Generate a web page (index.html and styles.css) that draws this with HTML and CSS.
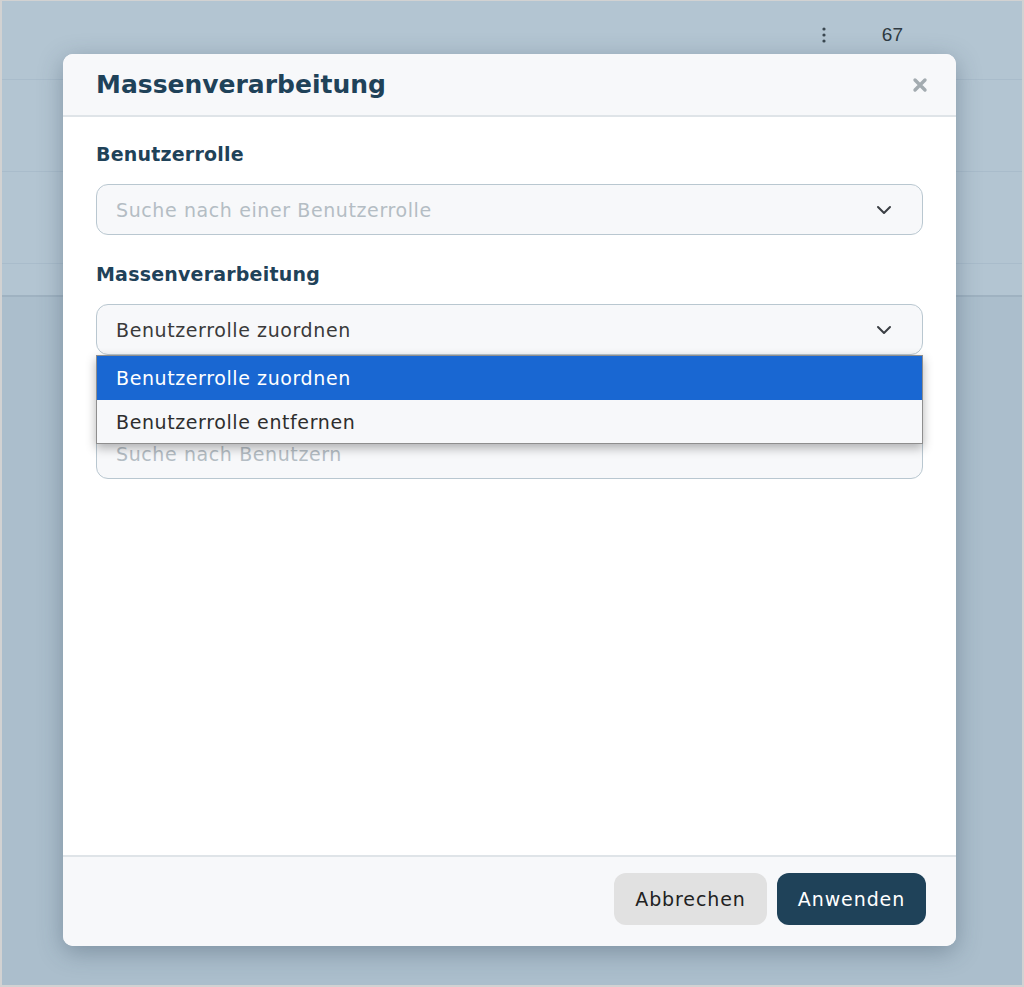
FILE: index.html
```html
<!DOCTYPE html>
<html lang="de">
<head>
<meta charset="utf-8">
<title>Massenverarbeitung</title>
<link rel="stylesheet" href="styles.css">
</head>
<body>
<div class="screen">
  <div class="page">
    <div class="page-toolbar">
      <span class="kebab">
        <svg width="4" height="16" viewBox="0 0 4 16"><circle cx="2" cy="2" r="1.6"/><circle cx="2" cy="8" r="1.6"/><circle cx="2" cy="14" r="1.6"/></svg>
      </span>
      <span class="count">67</span>
    </div>
    <div class="page-row tall"></div>
    <div class="page-row tall"></div>
    <div class="page-row short"></div>
    <div class="page-rest"></div>
  </div>

  <div class="overlay">
    <div class="modal">
      <div class="modal-header">
        <h1 class="modal-title">Massenverarbeitung</h1>
        <button class="close-btn" aria-label="Schließen">
          <svg width="16" height="16" viewBox="0 0 16 16"><path d="M3 3 L13 13 M13 3 L3 13" stroke="#a3abb0" stroke-width="3.4" stroke-linecap="round"/></svg>
        </button>
      </div>
      <div class="modal-body">
        <div class="field">
          <label class="field-label">Benutzerrolle</label>
          <div class="select">
            <span class="placeholder">Suche nach einer Benutzerrolle</span>
            <svg class="chevron" width="16" height="10" viewBox="0 0 16 10"><path d="M2 2 L8 8 L14 2" fill="none" stroke="#3b3f44" stroke-width="2" stroke-linecap="round" stroke-linejoin="round"/></svg>
          </div>
        </div>
        <div class="field">
          <label class="field-label">Massenverarbeitung</label>
          <div class="select-wrap">
            <div class="select">
              <span class="value">Benutzerrolle zuordnen</span>
              <svg class="chevron" width="16" height="10" viewBox="0 0 16 10"><path d="M2 2 L8 8 L14 2" fill="none" stroke="#3b3f44" stroke-width="2" stroke-linecap="round" stroke-linejoin="round"/></svg>
            </div>
            <ul class="options">
              <li class="option selected">Benutzerrolle zuordnen</li>
              <li class="option">Benutzerrolle entfernen</li>
            </ul>
          </div>
        </div>
        <div class="field field-users">
          <label class="field-label">Benutzer</label>
          <div class="select">
            <span class="placeholder">Suche nach Benutzern</span>
          </div>
        </div>
      </div>
      <div class="modal-footer">
        <button class="btn btn-secondary">Abbrechen</button>
        <button class="btn btn-primary">Anwenden</button>
      </div>
    </div>
  </div>
</div>
</body>
</html>
```
FILE: styles.css
```css
* {
  box-sizing: border-box;
}

html, body {
  margin: 0;
  padding: 0;
}

body {
  font-family: "DejaVu Sans", "Open Sans", sans-serif;
  color: #333;
}

.screen {
  position: relative;
  width: 1024px;
  height: 987px;
  border: 2px solid #d2d2d2;
  border-top-width: 1px;
  overflow: hidden;
}

/* dimmed page behind the dialog */
.page {
  height: 100%;
  display: flex;
  flex-direction: column;
  background: #b3c5d2;
}

.page-toolbar {
  height: 79px;
  flex: none;
  display: flex;
  align-items: center;
  justify-content: flex-end;
  padding: 0 119px 10px 0;
  gap: 56px;
  border-bottom: 1px solid #a9bccb;
}

.kebab svg {
  display: block;
  fill: #3a4750;
}

.count {
  font-family: "Liberation Sans", Arial, sans-serif;
  font-size: 19px;
  color: #2f3a42;
}

.page-row {
  flex: none;
  border-bottom: 1px solid #a9bccb;
}

.page-row.tall {
  height: 92px;
}

.page-row.short {
  height: 33px;
  border-bottom: 2px solid #9fb2c1;
}

.page-rest {
  flex: 1;
  background: #abbecc;
}

/* dialog */
.overlay {
  position: absolute;
  inset: 0;
  padding: 53px 0 0 61px;
}

.modal {
  width: 893px;
  height: 892px;
  display: flex;
  flex-direction: column;
  background: #fff;
  border-radius: 10px;
  overflow: hidden;
  box-shadow: 0 6px 24px rgba(40, 60, 80, 0.35);
}

.modal-header {
  height: 63px;
  flex: none;
  display: flex;
  align-items: center;
  justify-content: space-between;
  padding: 0 28px 0 33px;
  background: #f7f8fa;
  border-bottom: 2px solid #dfe4e8;
}

.modal-title {
  margin: 0;
  font-size: 25px;
  font-weight: 700;
  color: #1f4259;
}

.close-btn {
  border: 0;
  background: none;
  padding: 0;
  display: flex;
}

.modal-body {
  flex: 1;
  display: flex;
  flex-direction: column;
  gap: 27px;
  padding: 25px 33px 0;
}

.field {
  display: flex;
  flex-direction: column;
  gap: 18px;
}

.field-users {
  margin-top: 4px;
}

.field-label {
  font-size: 19px;
  font-weight: 700;
  letter-spacing: 0.2px;
  color: #1f4259;
  line-height: 24px;
}

.select-wrap {
  position: relative;
}

.select {
  height: 51px;
  display: flex;
  align-items: center;
  justify-content: space-between;
  padding: 0 30px 0 19px;
  background: #f7f8fa;
  border: 1px solid #b9c7d0;
  border-radius: 12px;
  font-size: 19px;
  letter-spacing: 0.6px;
}

.placeholder {
  color: #b4bdc4;
}

.value {
  color: #3a3a3a;
}

.chevron {
  display: block;
}

.options {
  position: absolute;
  left: 0;
  right: 0;
  top: 51px;
  z-index: 2;
  margin: 0;
  padding: 0;
  list-style: none;
  background: #f7f8fa;
  border: 1px solid #8e8e8e;
  box-shadow: 0 4px 10px rgba(0, 0, 0, 0.3);
  font-size: 19px;
  letter-spacing: 0.6px;
}

.option {
  height: 43px;
  display: flex;
  align-items: center;
  padding: 0 19px;
  color: #2e2e2e;
}

.option.selected {
  height: 44px;
  background: #1967d2;
  color: #fff;
}

.modal-footer {
  height: 91px;
  flex: none;
  display: flex;
  justify-content: flex-end;
  align-items: center;
  gap: 10px;
  padding: 0 30px 6px;
  background: #f7f8fa;
  border-top: 2px solid #dfe4e8;
}

.btn {
  height: 52px;
  border: 0;
  border-radius: 12px;
  font-family: inherit;
  font-size: 19px;
  letter-spacing: 0.9px;
  padding: 0 8px;
}

.btn-secondary {
  width: 153px;
  background: #e1e1e1;
  color: #222;
}

.btn-primary {
  width: 149px;
  background: #1f4259;
  color: #fff;
}
```
